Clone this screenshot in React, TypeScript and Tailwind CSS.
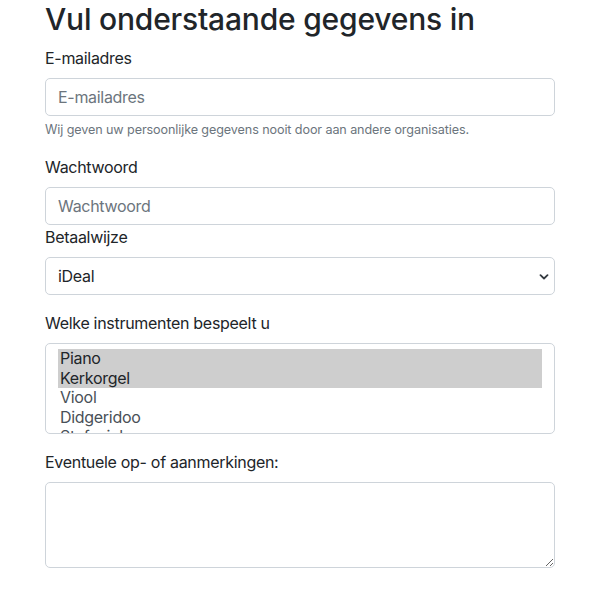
import { useState } from 'react'

const instruments = ['Piano', 'Kerkorgel', 'Viool', 'Didgeridoo', 'Stafspiel']

export default function App() {
  const [selected] = useState(['Piano', 'Kerkorgel'])

  return (
    <div className="min-h-[600px] bg-white font-['Inter',sans-serif] text-[16px] leading-6 tracking-[-0.3px] text-[#212529]">
      <form className="mx-[45px] flex flex-col">
        <h2 className="mb-2 text-[30px] font-medium leading-[38px] tracking-[-0.2px]">
          Vul onderstaande gegevens in
        </h2>

        {/* E-mail */}
        <div className="mb-4 flex flex-col">
          <label className="mb-2">E-mailadres</label>
          <input
            type="email"
            placeholder="E-mailadres"
            className="h-[38px] rounded-[5px] border border-[#ced4da] px-3 text-[16px] tracking-[-0.3px] placeholder:text-[#6c757d] outline-none"
          />
          <small className="mt-1 text-[12.6px] leading-[19px] tracking-[-0.1px] text-[#6c757d]">
            Wij geven uw persoonlijke gegevens nooit door aan andere organisaties.
          </small>
        </div>

        {/* Wachtwoord */}
        <div className="flex flex-col">
          <label className="mb-2">Wachtwoord</label>
          <input
            type="password"
            placeholder="Wachtwoord"
            className="h-[38px] rounded-[5px] border border-[#ced4da] px-3 text-[16px] tracking-[-0.3px] placeholder:text-[#6c757d] outline-none"
          />
        </div>

        {/* Betaalwijze */}
        <div className="mb-4 flex flex-col">
          <label className="mb-2">Betaalwijze</label>
          <div className="relative flex h-[38px] items-center rounded-[5px] border border-[#ced4da] px-3">
            <span>iDeal</span>
            <svg
              className="absolute right-[5px] top-[16px]"
              width="10"
              height="6"
              viewBox="0 0 10 6"
              fill="none"
            >
              <path d="M1.5 1.2 5 4.5 8.5 1.2" stroke="#343a40" strokeWidth="1.8" strokeLinecap="round" strokeLinejoin="round" />
            </svg>
          </div>
        </div>

        {/* Instrumenten */}
        <div className="mb-4 flex flex-col">
          <label className="mb-2">Welke instrumenten bespeelt u</label>
          <div className="h-[91px] overflow-hidden rounded-[5px] border border-[#ced4da] px-3 pt-[5px]">
            {instruments.map((name) => (
              <div
                key={name}
                className={
                  'h-[19.5px] px-[2px] text-[16px] leading-[19.5px] ' +
                  (selected.includes(name) ? 'bg-[#cecece] text-[#212529]' : 'text-[#495057]')
                }
              >
                {name}
              </div>
            ))}
          </div>
        </div>

        {/* Opmerkingen */}
        <div className="flex flex-col">
          <label className="mb-2">Eventuele op- of aanmerkingen:</label>
          <textarea className="h-[86px] rounded-[5px] border border-[#ced4da] px-3 py-1.5 outline-none" />
        </div>
      </form>
    </div>
  )
}
